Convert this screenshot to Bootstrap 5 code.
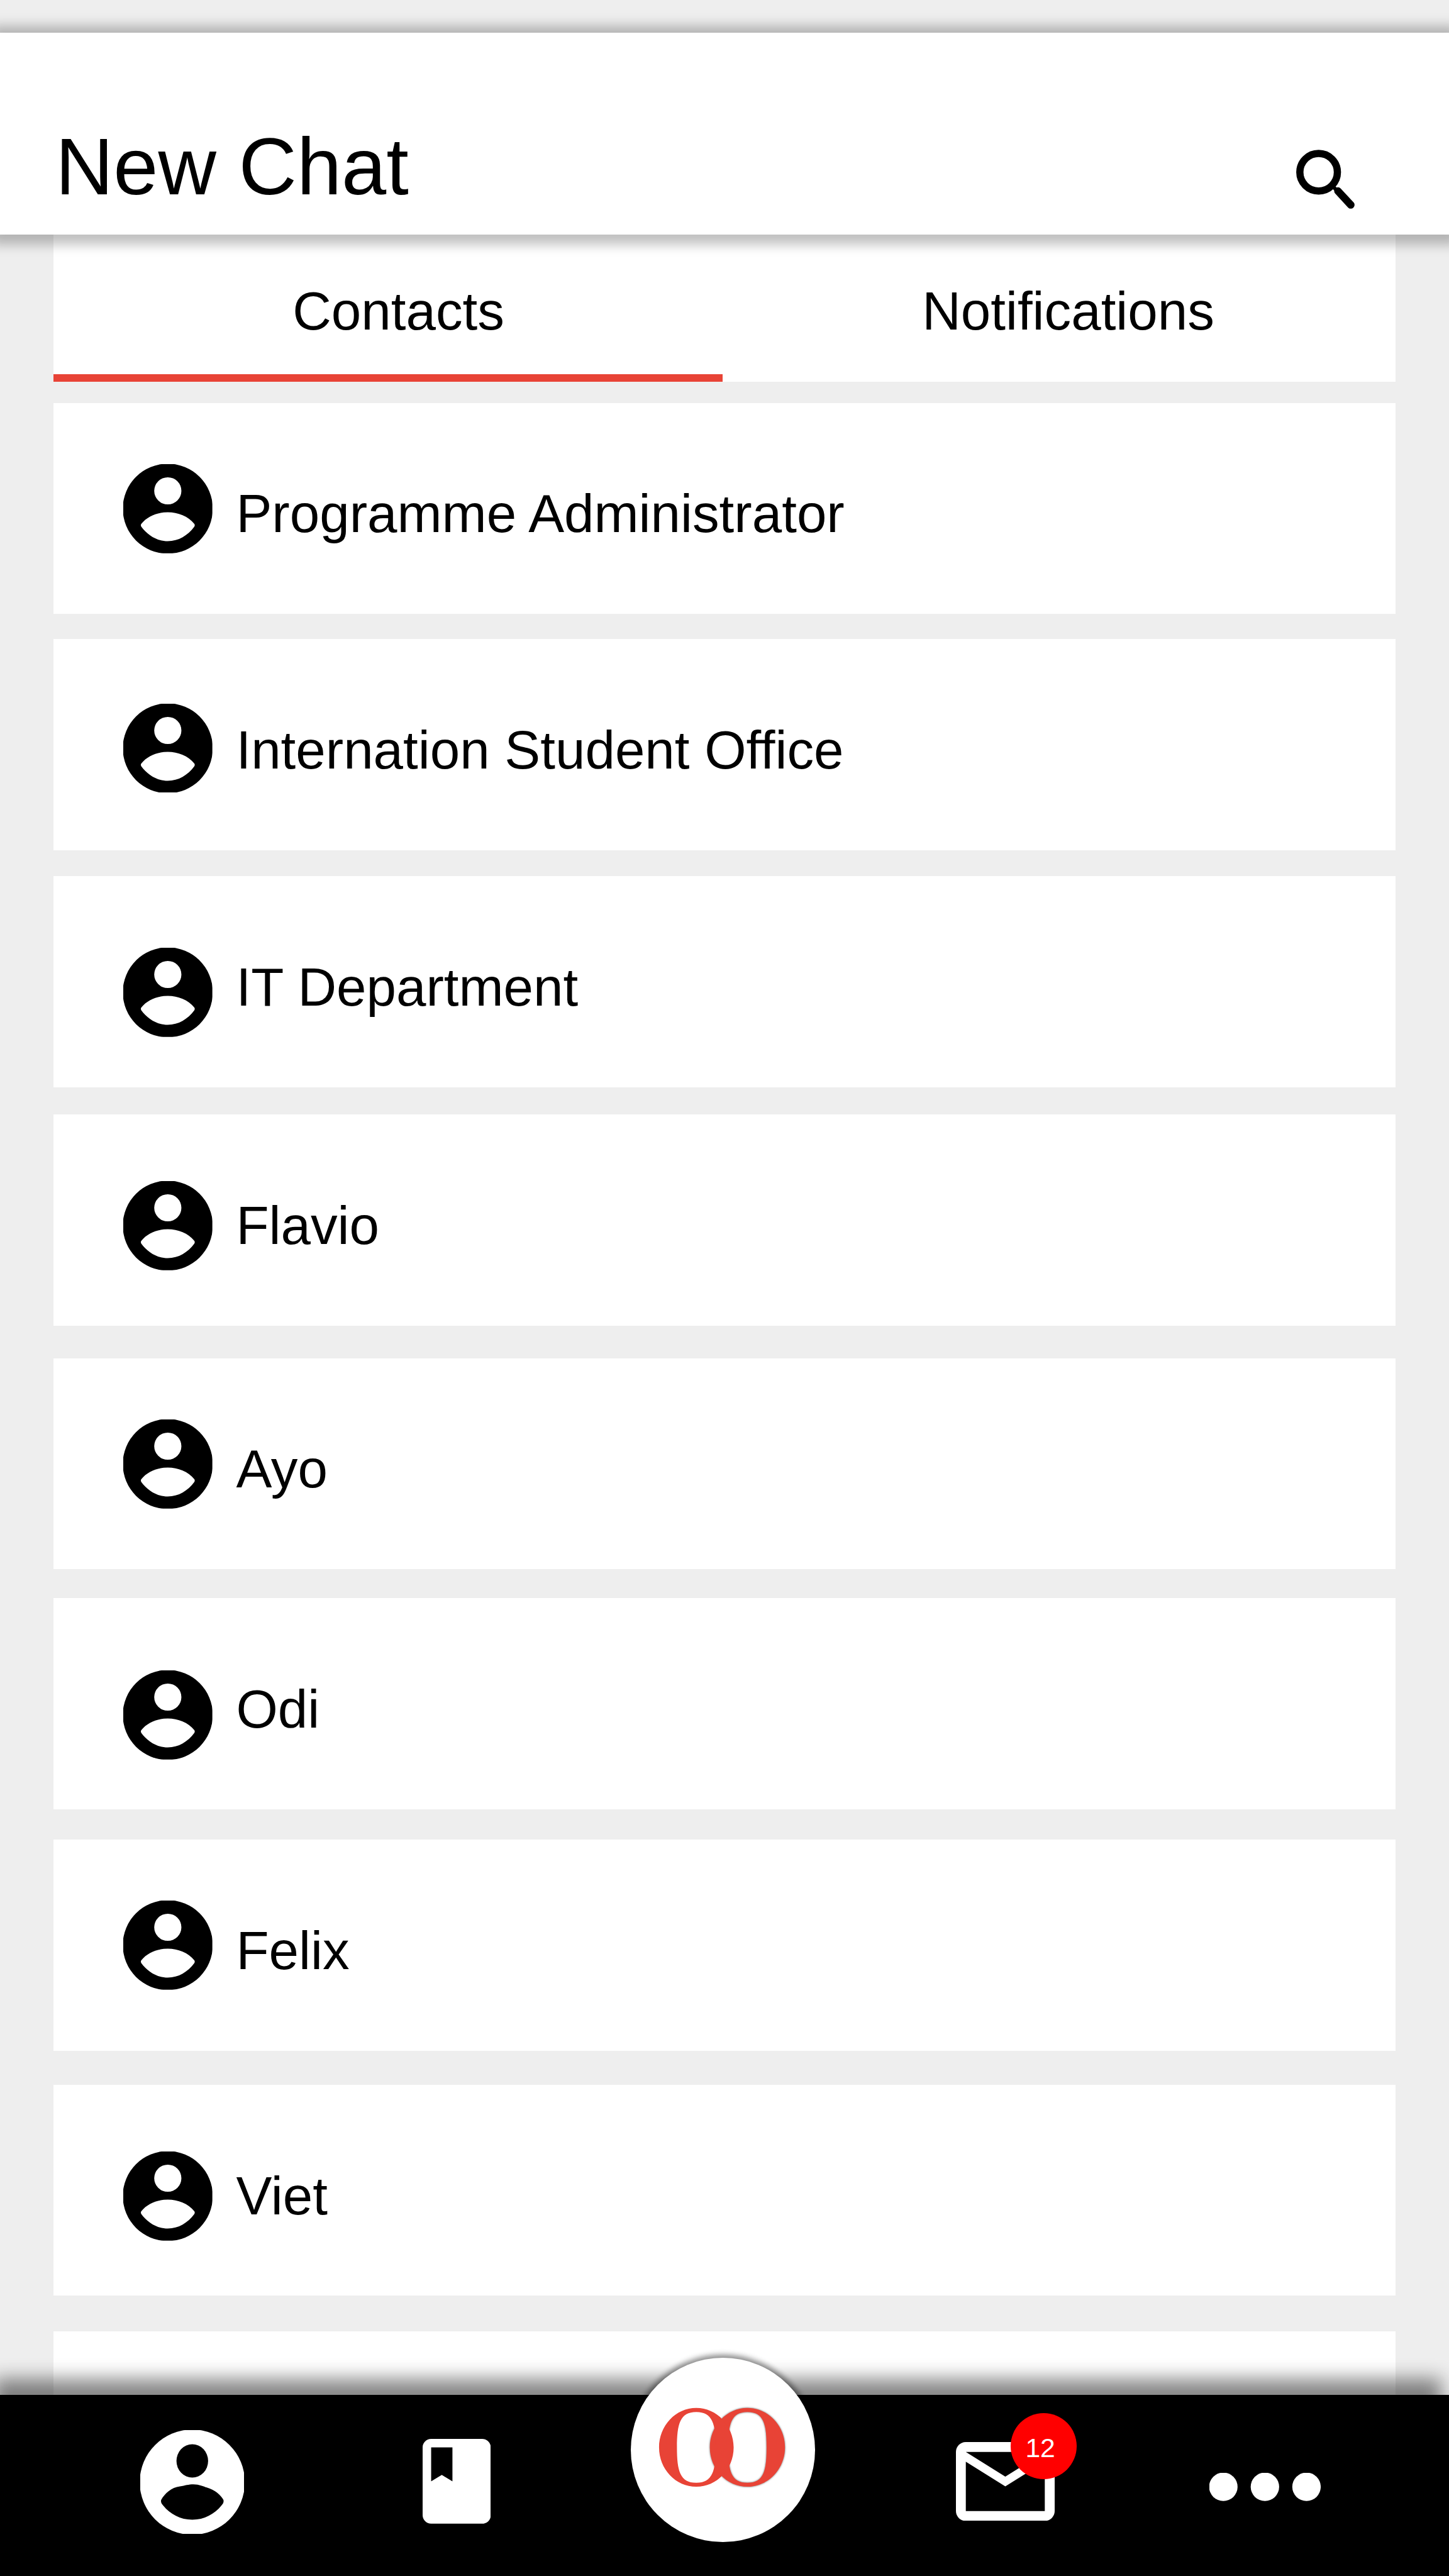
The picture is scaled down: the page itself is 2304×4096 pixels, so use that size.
<!DOCTYPE html>
<html lang="en">
<head>
<meta charset="utf-8">
<meta name="viewport" content="width=device-width, initial-scale=1">
<title>New Chat</title>
<link href="https://cdn.jsdelivr.net/npm/bootstrap@5.3.0/dist/css/bootstrap.min.css" rel="stylesheet">
<style>
  /* 1rem is ten design units of a 2700-unit wide screen */
  html { font-size: 8.533333px; }
  body {
    font-family: "Liberation Sans", Arial, sans-serif;
    font-size: 10rem; line-height: 1; color: #000;
    background: #eee; height: 480rem; overflow: hidden;
  }
  svg { display: block; flex: none; }
  .app-head {
    z-index: 2; margin-top: 6.1rem; height: 37.6rem; padding: 17.4rem 17.4rem 0 10.3rem;
    box-shadow: 0 .3rem 2.1rem 1.6rem rgba(0,0,0,.25);
  }
  .app-title { font-size: 15rem; line-height: 1; }
  .search-icon { width: 11.2rem; height: 11.2rem; margin-top: 4.4rem; }
  .content-col { width: 250rem; margin-left: 10rem; }
  .chat-tabs { height: 27.4rem; }
  .chat-tabs .nav-link { color: #000; font-size: 10rem; line-height: 1; padding: 9.3rem 0 0; border: 0; border-radius: 0; }
  .tab-contacts { width: 124.7rem; padding-left: 3.8rem !important; border-bottom: 1.5rem solid #e84336 !important; }
  .tab-notify { width: 125.3rem; padding-left: 3.4rem !important; }
  .contact { height: 39.3rem; padding-left: 13rem; border: 0; border-radius: 0; flex: none; }
  .contact .avatar { width: 16.6rem; height: 16.6rem; margin-right: 4.4rem; }
  .contact .who { margin-top: 15.65rem; white-space: nowrap; }
  .contact:nth-child(1) { margin-top: 4rem; }
  .contact:nth-child(2) { margin-top: 4.7rem; }
  .contact:nth-child(3) { margin-top: 4.9rem; }
  .contact:nth-child(4) { margin-top: 5.1rem; }
  .contact:nth-child(5) { margin-top: 6.1rem; }
  .contact:nth-child(6) { margin-top: 5.4rem; }
  .contact:nth-child(7) { margin-top: 5.7rem; }
  .contact:nth-child(8) { margin-top: 6.4rem; }
  .contact:nth-child(9) { margin-top: 6.6rem; }
  .avatar { margin-top: 11.4rem; }
  .contact:nth-child(2) .avatar { margin-top: 12rem; }
  .contact:nth-child(3) .avatar { margin-top: 13.3rem; }
  .contact:nth-child(4) .avatar, .contact:nth-child(8) .avatar { margin-top: 12.4rem; }
  .contact:nth-child(6) .avatar { margin-top: 13.5rem; }
  .dock { height: 33.8rem; background: #000; box-shadow: -1.3rem -3rem 3.3rem rgba(0,0,0,.475); }
  .dock-user { width: 19.4rem; height: 19.4rem; margin: 6.6rem 0 0 26.1rem; }
  .dock-book { width: 12.7rem; height: 15.8rem; margin: 8.3rem 0 0 33.2rem; }
  .dock-home {
    width: 34.4rem; height: 34.4rem; margin: -6.9rem 0 0 26.1rem; flex: none;
    box-shadow: 0 -.2rem 1rem .4rem rgba(0,0,0,.45);
  }
  .dock-home svg { width: 34.4rem; height: 34.4rem; }
  .logo-back { filter: drop-shadow(0 0 5px rgba(0,0,0,.6)); }
  .dock-mail { margin: 8.8rem 0 0 26.2rem; width: 18.4rem; flex: none; }
  .dock-mail svg { width: 18.4rem; height: 14.7rem; }
  .unread {
    position: absolute; left: 10.2rem; top: -5.3rem; width: 12.3rem; height: 12.3rem;
    background: #f00; font-size: 5rem; font-weight: 400; line-height: 1; color: #fff; padding: 3.95rem 1.2rem 0 0;
    text-align: center;
  }
  .dock-more { width: 20.7rem; height: 5.2rem; margin: 14.6rem 0 0 28.9rem; }
</style>
</head>
<body>
<svg width="0" height="0" class="position-absolute" aria-hidden="true">
  <symbol id="person" viewBox="2 2 20 20">
    <path fill-rule="evenodd" d="M12 1.9a10.1 10.1 0 1 0 0 20.2a10.1 10.1 0 0 0 0-20.2zM12 4.95a3.05 3.05 0 1 1 0 6.1a3.05 3.05 0 0 1 0-6.1zM6.05 15.4C7.4 13.7 9.7 12.8 12 12.8s4.6.9 5.95 2.6q.2.3 0 .65C16.5 18 14.4 19.3 12 19.3s-4.5-1.3-5.95-3.25q-.2-.35 0-.65z"/>
  </symbol>
</svg>

<header class="app-head bg-white position-relative d-flex justify-content-between align-items-start">
  <h1 class="app-title fw-normal m-0">New Chat</h1>
  <svg class="search-icon" viewBox="0 0 112 112" fill="none" stroke="#000">
    <circle cx="43" cy="42" r="35" stroke-width="13.5"/>
    <path d="M67 66l11 11" stroke-width="7"/>
    <path d="M79 77l24 26" stroke-width="14" stroke-linecap="round"/>
  </svg>
</header>

<main class="content-col d-flex flex-column">
  <nav class="chat-tabs nav bg-white flex-nowrap">
    <a class="nav-link tab-contacts text-center">Contacts</a>
    <a class="nav-link tab-notify text-center">Notifications</a>
  </nav>
  <div class="d-flex flex-column">
    <div class="contact card flex-row align-items-start"><svg class="avatar"><use href="#person"/></svg><span class="who">Programme Administrator</span></div>
    <div class="contact card flex-row align-items-start"><svg class="avatar"><use href="#person"/></svg><span class="who">Internation Student Office</span></div>
    <div class="contact card flex-row align-items-start"><svg class="avatar"><use href="#person"/></svg><span class="who">IT Department</span></div>
    <div class="contact card flex-row align-items-start"><svg class="avatar"><use href="#person"/></svg><span class="who">Flavio</span></div>
    <div class="contact card flex-row align-items-start"><svg class="avatar"><use href="#person"/></svg><span class="who">Ayo</span></div>
    <div class="contact card flex-row align-items-start"><svg class="avatar"><use href="#person"/></svg><span class="who">Odi</span></div>
    <div class="contact card flex-row align-items-start"><svg class="avatar"><use href="#person"/></svg><span class="who">Felix</span></div>
    <div class="contact card flex-row align-items-start"><svg class="avatar"><use href="#person"/></svg><span class="who">Viet</span></div>
    <div class="contact card"></div>
  </div>
</main>

<nav class="dock fixed-bottom d-flex align-items-start">
  <svg class="dock-user" viewBox="0 0 194 194">
    <circle cx="97" cy="97" r="98" fill="#fff"/>
    <ellipse cx="97" cy="57.5" rx="29.5" ry="31"/>
    <path d="M39 130C46 118 58 107 74 105C84 103 90 101 99 101C110 101 118 105 124 107C140 112 150 121 155 130Q156 134 154 137C141 155 121 167 97 167S53 155 40 137Q38 134 39 130z"/>
  </svg>
  <svg class="dock-book" viewBox="4 2 16 20" preserveAspectRatio="none" fill="#fff">
    <path d="M18 2H6c-1.100 0-2 .9-2 2v16c0 1.100.9 2 2 2h12c1.100 0 2-.9 2-2V4c0-1.100-.9-2-2-2zM6 4h5v8l-2.500-1.500L6 12V4z"/>
  </svg>
  <div class="dock-home bg-white rounded-circle">
    <svg viewBox="0 0 1032 1032" fill="#e84336">
      <g transform="translate(-225 -279)">
        <path class="logo-back" fill-rule="evenodd" d="M877 559C992 559 1087 658 1087 780S992 1000 877 1000S667 902 667 780S762 559 877 559zM877 582C785 582 770 650 770 780S785 978 877 978S984 910 984 780S969 582 877 582z"/>
        <path fill-rule="evenodd" d="M591 559C706 559 800 658 800 780S706 1000 591 1000S383 902 383 780S476 559 591 559zM591 582C500 582 483 650 483 780S500 978 591 978S700 910 700 780S682 582 591 582z"/>
      </g>
    </svg>
  </div>
  <div class="dock-mail position-relative">
    <svg viewBox="2 4 20 16" preserveAspectRatio="none" fill="#fff">
      <path d="M22 6c0-1.100-.9-2-2-2H4c-1.100 0-2 .9-2 2v12c0 1.100.9 2 2 2h16c1.100 0 2-.9 2-2V6zm-2 0l-8 5-8-5h16zm0 12H4V8l8 5 8-5v10z"/>
    </svg>
    <span class="unread rounded-circle">12</span>
  </div>
  <svg class="dock-more" viewBox="0 0 207 52" fill="#fff">
    <circle cx="26" cy="26" r="26.500"/><circle cx="103.500" cy="26" r="26.500"/><circle cx="181" cy="26" r="26.500"/>
  </svg>
</nav>
<script src="https://cdn.jsdelivr.net/npm/bootstrap@5.3.0/dist/js/bootstrap.bundle.min.js"></script>
</body>
</html>
